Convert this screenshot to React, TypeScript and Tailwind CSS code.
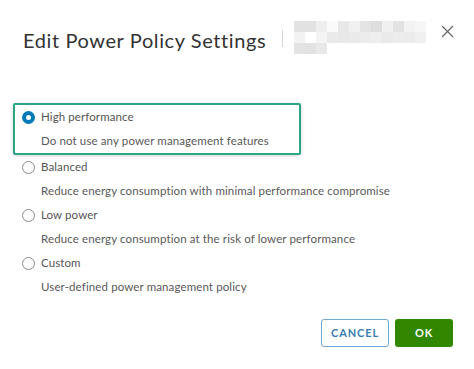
import React from 'react';

const blur = [
  ['#e2e2e2', '#e2e2e2', '#eeeeee', '#fafafa', '#e8e8e8', '#f1f1f1', '#e4e4e4', '#dedede', '#f0f0f0', '#e2e2e2', '#f2f2f2', '#f6f6f6'],
  ['#f2f2f2', '#ffffff', '#f4f4f4', '#eaeaea', '#e8e8e8', '#eaeaea', '#ececec', '#eeeeee', '#eaeaea', '#ececec', '#ebebeb', '#f0f0f0'],
  ['#e4e4e4', '#e2e2e2', '#e8e8e8'],
];

interface Option {
  label: string;
  desc: string;
  checked?: boolean;
}

const options: Option[] = [
  { label: 'High performance', desc: 'Do not use any power management features', checked: true },
  { label: 'Balanced', desc: 'Reduce energy consumption with minimal performance compromise' },
  { label: 'Low power', desc: 'Reduce energy consumption at the risk of lower performance' },
  { label: 'Custom', desc: 'User-defined power management policy' },
];

function Radio({ checked }: { checked?: boolean }) {
  if (checked) {
    return (
      <span className="flex h-[13px] w-[13px] shrink-0 items-center justify-center rounded-full bg-[#0079b8]">
        <span className="h-[5px] w-[5px] rounded-full bg-white" />
      </span>
    );
  }
  return <span className="h-[13px] w-[13px] shrink-0 rounded-full border border-[#8c8c8c] bg-white" />;
}

function OptionRows({ opt }: { opt: Option }) {
  return (
    <>
      <div className="flex h-[24px] items-center gap-[6px]">
        <Radio checked={opt.checked} />
        <span className="text-[11.5px] tracking-[0.1px] text-[#555]">{opt.label}</span>
      </div>
      <div className="flex h-[24px] items-center pl-[19px] text-[11.5px] tracking-[0.12px] text-[#595959]">{opt.desc}</div>
    </>
  );
}

export default function App() {
  return (
    <div className="h-[369px] w-[474px] overflow-hidden bg-white" style={{ fontFamily: 'Lato, "Noto Sans", sans-serif' }}>
      {/* header */}
      <div className="flex h-[78px] items-start pl-[23px] pr-[20px] pt-[21px]">
        <h1 className="mt-[5px] text-[20px] leading-[28px] tracking-[0.6px] text-[#333]">Edit Power Policy Settings</h1>
        <div className="ml-[16px] mt-[9px] h-[17px] w-px bg-[#d6d6d6]" />
        <div className="ml-[11px] flex flex-col">
          {blur.map((row, i) => (
            <div key={i} className="flex">
              {row.map((c, j) => (
                <div key={j} className="h-[11px] w-[11px]" style={{ background: c }} />
              ))}
            </div>
          ))}
        </div>
        <button className="ml-auto mt-[4px] text-[#666]">
          <svg width="13" height="13" viewBox="0 0 13 13" fill="none" stroke="currentColor" strokeWidth="1.2">
            <path d="M1 1l11 11M12 1L1 12" />
          </svg>
        </button>
      </div>

      {/* options */}
      <div className="mt-[25px] flex flex-col">
        <div className="ml-[13px] w-[288px] rounded-[2px] border-2 border-[#2aa586] pl-[7px] shadow-[0_1px_4px_rgba(0,0,0,0.18)]">
          <OptionRows opt={options[0]} />
        </div>
        <div className="ml-[22px]">
          {options.slice(1).map((o) => (
            <OptionRows key={o.label} opt={o} />
          ))}
        </div>
      </div>

      {/* footer */}
      <div className="mt-[20px] flex justify-end gap-[6px] pr-[21px]">
        <button className="h-[28px] w-[68px] rounded-[3px] border border-[#6fa9d2] text-[11px] font-bold tracking-[0.08em] text-[#3a7db0]">
          CANCEL
        </button>
        <button className="h-[28px] w-[58px] rounded-[3px] bg-[#318700] text-[11px] font-bold tracking-[0.08em] text-white">
          OK
        </button>
      </div>
    </div>
  );
}
